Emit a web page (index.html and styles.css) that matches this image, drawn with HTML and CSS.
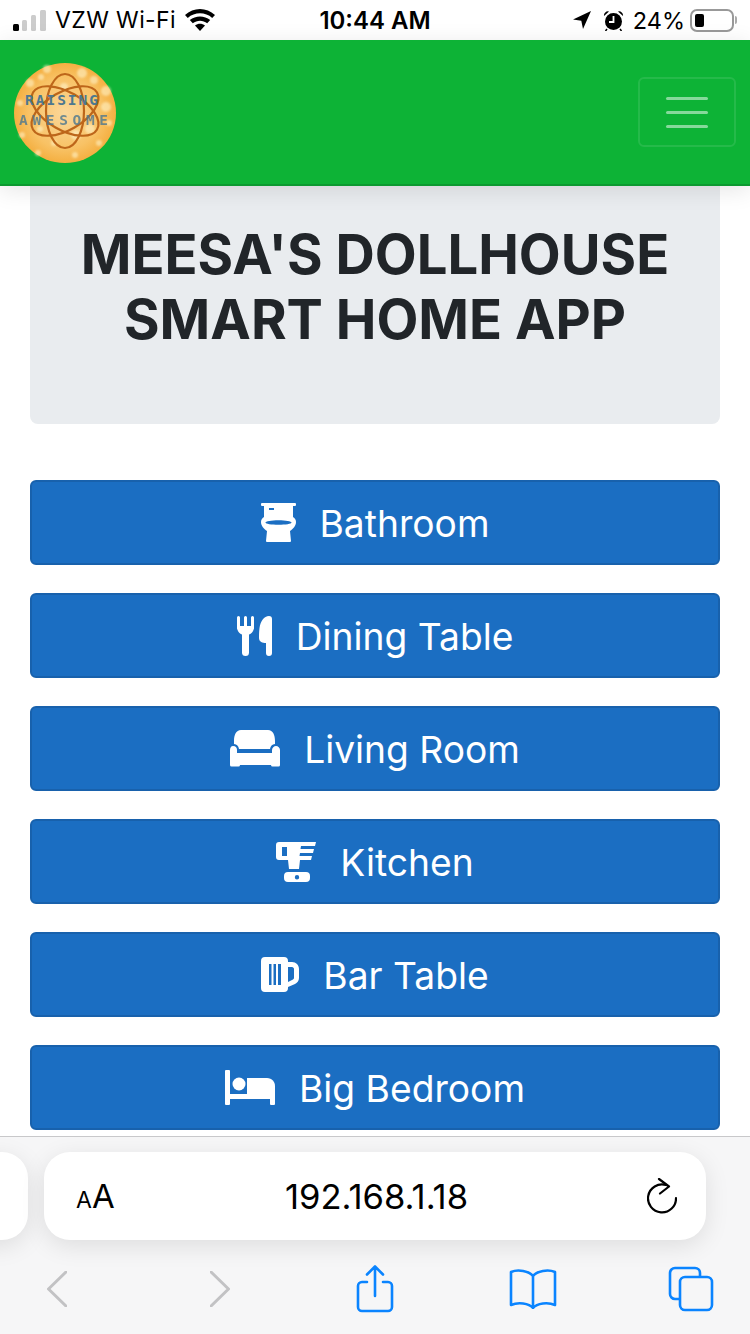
FILE: index.html
```html
<!DOCTYPE html>
<html lang="en">
<head>
  <meta charset="UTF-8" />
  <title>Meesa's Dollhouse</title>
  <link rel="stylesheet" href="styles.css">
</head>
<body>

  <!-- iOS status bar -->
  <div class="status-bar">
    <div class="status-left">
      <svg class="signal" width="34" height="21" viewBox="0 0 34 21">
        <rect x="0" y="14" width="6" height="7" rx="1.5" fill="#000"/>
        <rect x="9" y="10" width="5" height="11" rx="1.5" fill="#ccc"/>
        <rect x="18" y="5" width="5" height="16" rx="1.5" fill="#ccc"/>
        <rect x="27" y="0" width="6" height="21" rx="1.5" fill="#ccc"/>
      </svg>
      <span class="carrier">VZW Wi-Fi</span>
      <svg class="wifi" width="30" height="22" viewBox="0 0 30 22">
        <path d="M15 22l-5-5.500c3-2.400 7-2.400 10 0z" fill="#000"/>
        <path d="M7.800 14.200l-3-3.200c5.800-4.800 14.600-4.800 20.400 0l-3 3.200c-4.200-3.400-10.200-3.400-14.400 0z" fill="#000"/>
        <path d="M2.800 9L0 6C8.400-2 21.600-2 30 6l-2.800 3C20.400 2.800 9.600 2.800 2.800 9z" fill="#000"/>
      </svg>
    </div>
    <div class="clock">10:44 AM</div>
    <div class="status-right">
      <svg class="arrow" width="18" height="18" viewBox="0 0 18 18"><path d="M18 0L0 8.500l8.300 1.200L10 18z" fill="#000"/></svg>
      <svg class="alarm" width="21" height="21" viewBox="0 0 21 21">
        <circle cx="10.500" cy="11.500" r="8.500" fill="#000"/>
        <path d="M10.500 6v6H6" stroke="#fff" stroke-width="1.800" fill="none"/>
        <path d="M1 6a4 4 0 0 1 5-4.500zM20 6a4 4 0 0 0-5-4.500z" fill="#000"/>
        <path d="M4 19l-1.500 2M17 19l1.500 2" stroke="#000" stroke-width="1.500"/>
      </svg>
      <span class="battery-pct">24%</span>
      <div class="battery"><div class="battery-fill"></div></div>
      <div class="battery-tip"></div>
    </div>
  </div>

  <nav class="navbar">
    <svg class="logo" width="102" height="100" viewBox="0 0 102 100">
      <defs>
        <radialGradient id="logo-bg" cx="50%" cy="50%" r="55%">
          <stop offset="0" stop-color="#fbd79a"/>
          <stop offset="0.65" stop-color="#f8c265"/>
          <stop offset="1" stop-color="#f3a935"/>
        </radialGradient>
        <filter id="soft"><feGaussianBlur stdDeviation="0.8"/></filter>
      </defs>
      <ellipse cx="51" cy="50" rx="51" ry="50" fill="url(#logo-bg)"/>
      <g fill="#fff3c8" opacity="0.6" filter="url(#soft)">
        <circle cx="33" cy="6" r="4"/><circle cx="68" cy="10" r="5"/><circle cx="80" cy="17" r="4"/>
        <circle cx="92" cy="28" r="5"/><circle cx="16" cy="20" r="4"/><circle cx="27" cy="14" r="3"/>
        <circle cx="8" cy="72" r="3"/><circle cx="24" cy="90" r="3"/><circle cx="61" cy="92" r="3"/>
        <circle cx="85" cy="80" r="3"/><circle cx="95" cy="60" r="3"/><circle cx="92" cy="44" r="5"/>
        <circle cx="62" cy="72" r="5"/><circle cx="76" cy="66" r="5"/><circle cx="26" cy="66" r="3"/>
        <circle cx="40" cy="80" r="3"/><circle cx="6" cy="40" r="3"/><circle cx="50" cy="24" r="4"/>
      </g>
      <g fill="none" stroke="#bd661a" stroke-width="2.200">
        <ellipse cx="51" cy="48" rx="19" ry="37"/>
        <ellipse cx="51" cy="48" rx="19" ry="37" transform="rotate(60 51 48)"/>
        <ellipse cx="51" cy="48" rx="19" ry="37" transform="rotate(-60 51 48)"/>
      </g>
      <text class="logo-top" x="11" y="42" textLength="73">RAISING</text>
      <text class="logo-bottom" x="5" y="62" textLength="89">AWESOME</text>
    </svg>
    <button class="navbar-toggler">
      <span></span><span></span><span></span>
    </button>
  </nav>

  <main class="content">
    <div class="jumbotron">
      <h1>MEESA'S DOLLHOUSE SMART HOME APP</h1>
    </div>

    <div class="room-list">
      <a class="btn" href="#">
        <svg width="35" height="40" viewBox="0 0 35 40">
          <path fill-rule="evenodd" fill="#fff" d="M1 0h33a1 1 0 0 1 1 1v1a1 1 0 0 1-1 1h-2v11c2 1 3 3 3 5 0 4-3 7-6 9l1 10a1 1 0 0 1-1 1H6a1 1 0 0 1-1-1l1-10c-3-2-6-5-6-9 0-2 1-4 3-5V3H1a1 1 0 0 1-1-1V1a1 1 0 0 1 1-1zM8 5v2h5V5zM4.500 19.500c0 1.300 5.800 2.300 13 2.300s13-1 13-2.300-5.800-2.300-13-2.300-13 1-13 2.300z"/>
        </svg>
        Bathroom
      </a>
      <a class="btn" href="#">
        <svg width="35" height="40" viewBox="0 0 35 40">
          <path d="M1.500 1.500V12M8.500 1.500V12M15.500 1.500V12" stroke="#fff" stroke-width="3" stroke-linecap="round" fill="none"/>
          <path fill="#fff" d="M0 10h17c0 6-3 9-8.500 9S0 16 0 10z"/>
          <path d="M8.500 15v21.500" stroke="#fff" stroke-width="7" stroke-linecap="round" fill="none"/>
          <path fill="#fff" d="M35 3v34a3 3 0 0 1-6 0V27c-3.500 0-7-1-7-5 0-2 0-6 .5-10C23.500 5 27 0 32 0c2 0 3 1 3 3z"/>
        </svg>
        Dining Table
      </a>
      <a class="btn" href="#">
        <svg width="50" height="37" viewBox="0 0 50 37">
          <path fill="#fff" d="M11 0h27c5 0 7 5 7 11v3c-3 .5-4.500 2-5 5H9c-.5-3-2-4.500-5-5v-3C4 5 6 0 11 0z"/>
          <path fill="#fff" d="M3 16c3 0 4 2 4 4v3h35v-3c0-2 2-4 4-4s4 2 4 4v15a1.500 1.500 0 0 1-1.500 1.500h-6a1.500 1.500 0 0 1-1.500-1.500H10a1.500 1.500 0 0 1-1.500 1.500h-7A1.500 1.500 0 0 1 0 35V20c0-2 1-4 3-4z"/>
        </svg>
        Living Room
      </a>
      <a class="btn" href="#">
        <svg width="40" height="40" viewBox="0 0 40 40">
          <path fill-rule="evenodd" fill="#fff" d="M3 0h37l-1 4H25l-.5 3H38l-1 4H24l-.5 3H36l-1 4H24l-1 9H13l-1-9H3a3 3 0 0 1-3-3V3a3 3 0 0 1 3-3zM6 5v9h5V5z"/>
          <path fill-rule="evenodd" fill="#fff" d="M12 30h18a4 4 0 0 1 4 4v2a4 4 0 0 1-4 4H12a4 4 0 0 1-4-4v-2a4 4 0 0 1 4-4zm9 3a2.200 2.200 0 1 0 0 4.400 2.200 2.200 0 0 0 0-4.400z"/>
        </svg>
        Kitchen
      </a>
      <a class="btn" href="#">
        <svg width="38" height="35" viewBox="0 0 38 35">
          <path fill-rule="evenodd" fill="#fff" d="M4 0h19a4 4 0 0 1 4 4v1h4c4 0 7 3 7 7v9c0 3-2 5-4 6l-7 3v1a4 4 0 0 1-4 4H4a4 4 0 0 1-4-4V4a4 4 0 0 1 4-4zm4 7v21h2.500V7zm4.500 0v21H15V7zM17 7v21h3V7zm10 3v15l5-2.500c.7-.4 1-1 1-1.500v-9c0-1-1-2-2-2z"/>
        </svg>
        Bar Table
      </a>
      <a class="btn" href="#">
        <svg width="50" height="35" viewBox="0 0 50 35">
          <path fill="#fff" d="M1 0h3a1 1 0 0 1 1 1v23h45v10a1 1 0 0 1-1 1h-3a1 1 0 0 1-1-1v-5H5v5a1 1 0 0 1-1 1H1a1 1 0 0 1-1-1V1a1 1 0 0 1 1-1z"/>
          <circle fill="#fff" cx="14" cy="14" r="6.500"/>
          <path fill="#fff" d="M22 8h20c5 0 8 4 8 8v9H22z"/>
        </svg>
        Big Bedroom
      </a>
    </div>
  </main>

  <!-- Safari bottom bar -->
  <div class="safari">
    <div class="url-row">
      <div class="other-tab"></div>
      <div class="url-pill">
        <span class="text-size"><small>A</small>A</span>
        <span class="url">192.168.1.18</span>
        <svg class="reload" width="30" height="36" viewBox="0 0 30 36">
          <path d="M19 7A14 14 0 1 0 29 20" fill="none" stroke="#000" stroke-width="2.200" stroke-linecap="round"/>
          <path d="M12 1l10 7.500-9 7" fill="none" stroke="#000" stroke-width="2.200" stroke-linecap="round" stroke-linejoin="round"/>
        </svg>
      </div>
    </div>
    <div class="toolbar">
      <svg width="20" height="36" viewBox="0 0 20 36"><path d="M19 1L1.500 18 19 35" fill="none" stroke="#c2c2c4" stroke-width="3" stroke-linecap="round" stroke-linejoin="round"/></svg>
      <svg width="20" height="36" viewBox="0 0 20 36"><path d="M1 1l17.500 17L1 35" fill="none" stroke="#c2c2c4" stroke-width="3" stroke-linecap="round" stroke-linejoin="round"/></svg>
      <svg width="38" height="48" viewBox="0 0 38 48">
        <path d="M11 17H6a4 4 0 0 0-4 4v21a4 4 0 0 0 4 4h26a4 4 0 0 0 4-4V21a4 4 0 0 0-4-4h-5M19 31V2M11 9.500L19 1.500l8 8" fill="none" stroke="#0a84ff" stroke-width="2.600" stroke-linecap="round" stroke-linejoin="round"/>
      </svg>
      <svg width="48" height="40" viewBox="0 0 48 40">
        <path d="M24 7C20 2 9 0 2 3v33c7-3 18-2 22 3 4-5 15-6 22-3V3c-7-3-18-1-22 4zM24 7v31" fill="none" stroke="#0a84ff" stroke-width="2.600" stroke-linejoin="round"/>
      </svg>
      <svg width="46" height="46" viewBox="0 0 46 46">
        <path d="M11 33H7a5 5 0 0 1-5-5V7a5 5 0 0 1 5-5h20a5 5 0 0 1 5 5v4" fill="none" stroke="#0a84ff" stroke-width="2.600"/>
        <rect x="12" y="11" width="32" height="33" rx="5" fill="none" stroke="#0a84ff" stroke-width="2.600"/>
      </svg>
    </div>
  </div>

</body>
</html>
```

FILE: styles.css
```css
* {
  box-sizing: border-box;
}

html, body {
  margin: 0;
  height: 1334px;
  overflow: hidden;
}

body {
  display: flex;
  flex-direction: column;
  background: #fff;
  font-family: Inter, "Liberation Sans", sans-serif;
}

/* status bar */
.status-bar {
  height: 40px;
  display: grid;
  grid-template-columns: 1fr auto 1fr;
  align-items: center;
  padding: 0 13px;
  color: #000;
  font-size: 23px;
}

.status-left, .status-right {
  display: flex;
  align-items: center;
}

.status-right {
  justify-content: flex-end;
}

.carrier {
  margin-left: 8px;
  letter-spacing: 0.4px;
}

.wifi {
  margin-left: 9px;
}

.clock {
  font-weight: 600;
  font-size: 24px;
}

.alarm {
  margin-left: 12px;
}

.battery-pct {
  margin-left: 9px;
  font-size: 23.500px;
}

.battery {
  width: 44px;
  height: 23px;
  margin-left: 5px;
  padding: 3px;
  border: 2px solid #999;
  border-radius: 7px;
}

.battery-fill {
  width: 9px;
  height: 13px;
  background: #000;
  border-radius: 2px;
}

.battery-tip {
  width: 2px;
  height: 8px;
  margin: 0 0 0 1px;
  background: #aaa;
  border-radius: 0 2px 2px 0;
}

/* navbar */
.navbar {
  position: relative;
  z-index: 1;
  height: 146px;
  display: flex;
  align-items: center;
  justify-content: space-between;
  padding: 0 14px;
  background: #0db336;
  border-bottom: 2px solid #0c9a30;
  box-shadow: 0 4px 22px rgba(0,0,0,0.1);
}

.logo {
  margin-top: 1px;
}

.logo-top, .logo-bottom {
  font-family: "DejaVu Sans Mono", monospace;
  font-weight: 700;
  font-size: 14.500px;
  fill: #4d7890;
}

.logo-bottom {
  opacity: 0.8;
}

.navbar-toggler {
  width: 98px;
  height: 70px;
  display: flex;
  flex-direction: column;
  align-items: center;
  justify-content: center;
  gap: 11px;
  background: transparent;
  border: 2px solid rgba(255,255,255,0.1);
  border-radius: 6px;
  padding: 0;
}

.navbar-toggler span {
  width: 42px;
  height: 3px;
  background: rgba(255,255,255,0.5);
  border-radius: 2px;
}

/* page content */
.content {
  flex: 1;
  overflow: hidden;
  padding: 0 30px;
}

.jumbotron {
  height: 238px;
  padding-top: 36px;
  background: #e9ecef;
  border-radius: 0 0 8px 8px;
}

h1 {
  margin: 0 auto;
  width: 640px;
  color: #212529;
  font-size: 54.400px;
  font-weight: 700;
  line-height: 65px;
  text-align: center;
}

.room-list {
  display: flex;
  flex-direction: column;
  gap: 28px;
  margin-top: 56px;
}

.btn {
  height: 85px;
  display: flex;
  align-items: center;
  justify-content: center;
  gap: 24px;
  padding-top: 2px;
  background: #1b6ec2;
  border: 2px solid #1861ac;
  border-radius: 6px;
  color: #fff;
  font-size: 37.200px;
  text-decoration: none;
}

.btn svg {
  margin-top: -2px;
}

/* safari bar */
.safari {
  height: 198px;
  background: #f6f6f7;
  border-top: 1px solid #c8c8ca;
}

.url-row {
  display: flex;
  gap: 16px;
  margin-top: 15px;
  margin-left: -60px;
}

.other-tab, .url-pill {
  height: 88px;
  background: #fff;
  border-radius: 26px;
  box-shadow: 0 6px 24px rgba(0,0,0,0.1);
}

.other-tab {
  width: 88px;
  flex: none;
}

.url-pill {
  width: 662px;
  flex: none;
  display: flex;
  align-items: center;
  justify-content: space-between;
  padding: 0 29px 0 32px;
}

.text-size {
  width: 60px;
  font-size: 33px;
}

.text-size small {
  font-size: 23px;
}

.url {
  font-size: 34.600px;
  color: #000;
}

.reload {
  width: 30px;
  margin-left: 30px;
}

.toolbar {
  display: grid;
  grid-template-columns: 163px 146px 153px 159px 1fr;
  align-items: center;
  height: 80px;
  margin-top: 9px;
  padding-left: 47px;
}
```
